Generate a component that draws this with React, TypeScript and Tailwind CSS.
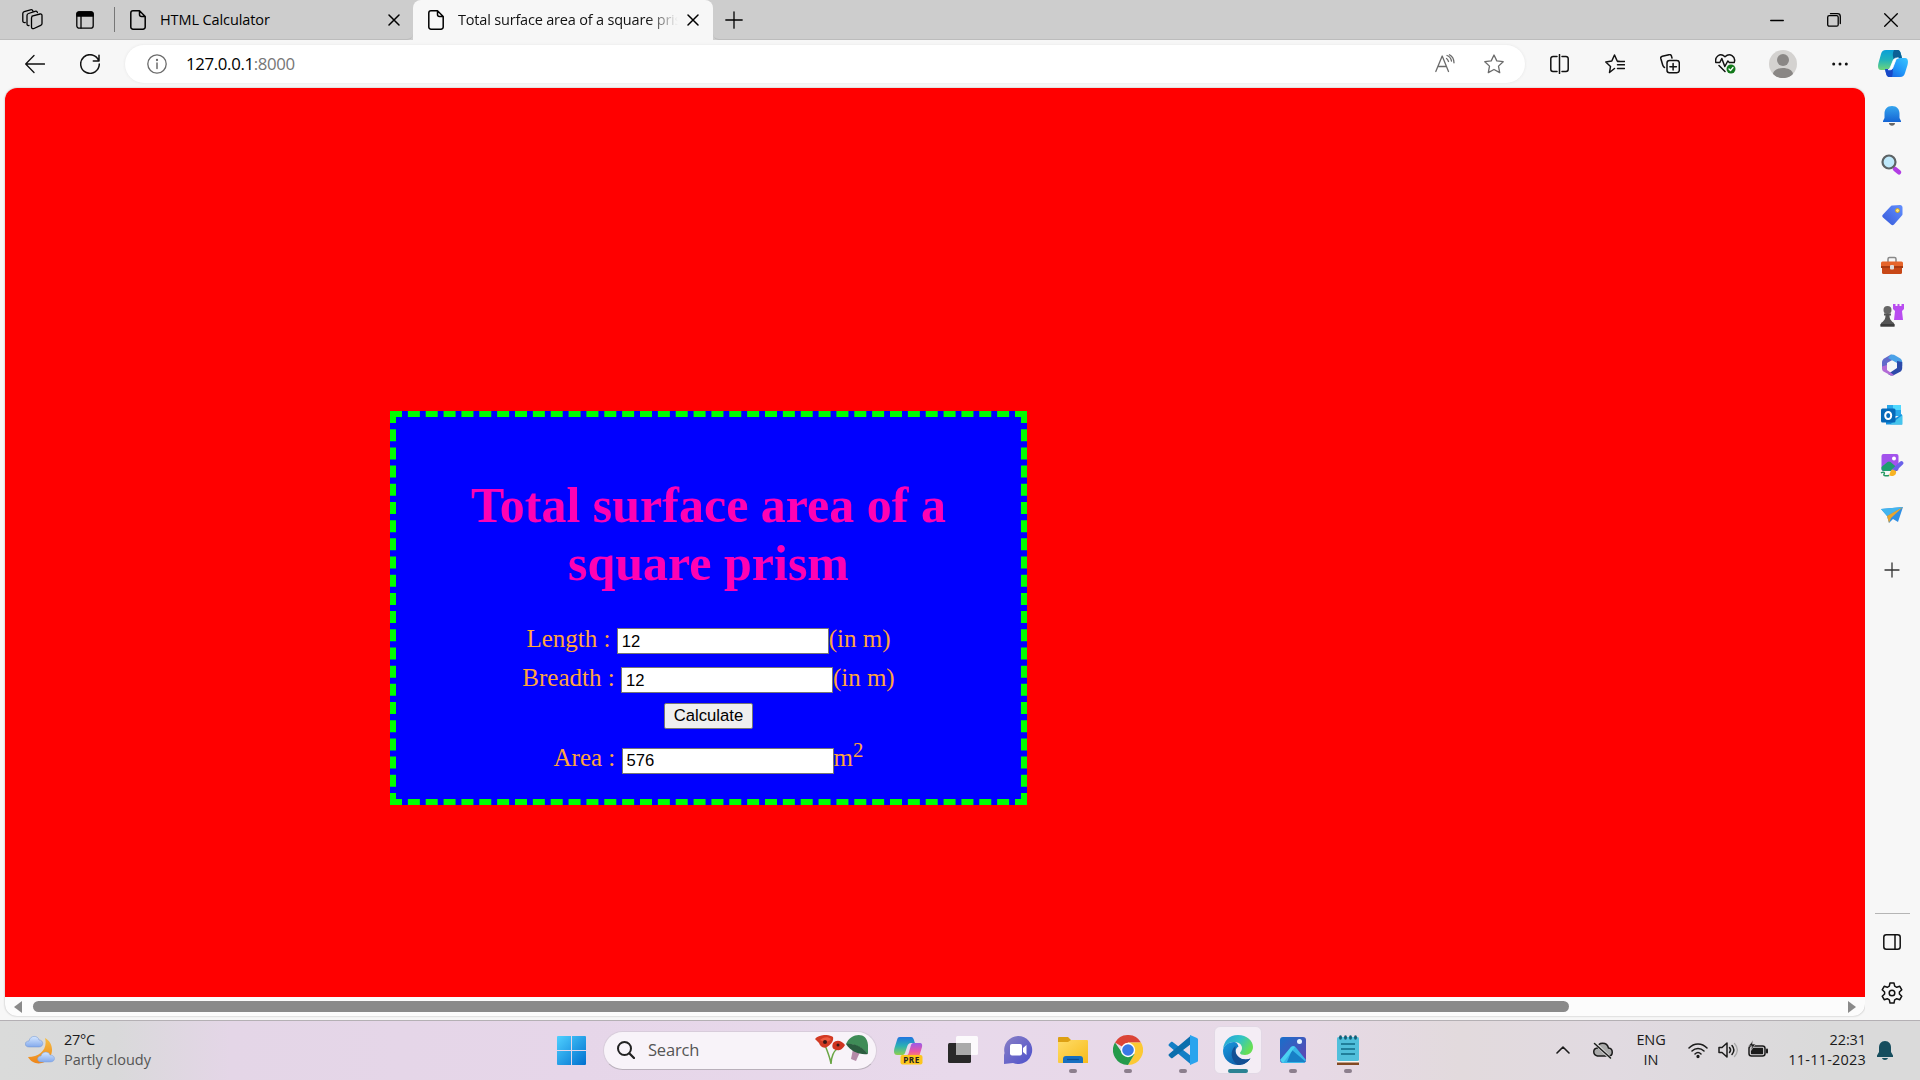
import React, { useState } from "react";

type SvgProps = { className?: string; children: React.ReactNode; box?: string };

function Svg({ className = "", children, box = "0 0 20 20" }: SvgProps) {
  const size = /(^|\s)w-/.test(className) ? "" : "w-5 h-5";
  return (
    <svg viewBox={box} className={`block shrink-0 ${size} ${className}`} fill="none" stroke="currentColor" strokeWidth={1.3} strokeLinecap="round" strokeLinejoin="round">
      {children}
    </svg>
  );
}

const DocIcon = () => (
  <Svg className="w-4 h-5" box="0 0 16 20">
    <path d="M3 .8h6.5L15.200 6.500V17a2.200 2.200 0 0 1-2.200 2.200H3A2.200 2.200 0 0 1 .8 17V3A2.200 2.200 0 0 1 3 .8ZM9.500 .8V4.500a2 2 0 0 0 2 2h3.700" strokeWidth="1.500" />
  </Svg>
);

const CloseIcon = () => (
  <Svg className="w-3 h-3" box="0 0 12 12">
    <path d="M1 1l10 10M11 1L1 11" strokeWidth="1.500" />
  </Svg>
);

function TabStrip() {
  return (
    <div className="flex h-10 items-center bg-[#cdcdcd] text-black">
      <div className="flex w-[413px] h-10 items-center rounded-br-md border-b border-[#bcbcbc]">
        <Svg className="ml-[22px] w-[21px] h-[21px]" box="0 0 21 21">
          <path d="M10 7.200l8-2.200c1.200-.3 2 .3 2 1.400v8c0 .9-.5 1.600-1.300 1.900L12 19.500c-1.400.5-2.500 0-2.500-1.500V9c0-1 .2-1.500 1.200-1.900Z" />
          <path d="M7 16.500c-1.300.3-2-.3-2-1.500V6.500c0-1 .5-1.700 1.500-2L13 2.300c1.300-.4 2.200 0 2.400 1.200M3.200 13.500C1.600 13.800.8 13 .8 12V4.500c0-1 .5-1.600 1.400-1.900L8.500.8c1.200-.3 2 0 2.300 1" />
        </Svg>
        <Svg className="ml-[33px] w-[18px] h-[18px]" box="0 0 18 18">
          <rect x=".8" y=".8" width="16.400" height="16.400" rx="2.500" />
          <path d="M1 5V3a2 2 0 0 1 2-2h12a2 2 0 0 1 2 2v2Z" fill="currentColor" />
          <path d="M5 5v12" />
        </Svg>
        <div className="ml-5 h-[25px] w-px bg-[#777]" />
        <div className="ml-[15px]"><DocIcon /></div>
        <span className="ml-[14px] w-[228px] whitespace-nowrap font-['Open_Sans',sans-serif] text-[14.500px] tracking-[-0.1px]">HTML Calculator</span>
        <CloseIcon />
      </div>
      <div className="flex h-10 w-[300px] items-center rounded-t-lg bg-[#f7f7f7]">
        <div className="ml-[15px]"><DocIcon /></div>
        <span className="ml-[14px] w-[220px] overflow-hidden whitespace-nowrap bg-[linear-gradient(to_right,#111_86%,transparent)] bg-clip-text font-['Open_Sans',sans-serif] text-[14.500px] tracking-[-0.19px] text-transparent">
          Total surface area of a square prism
        </span>
        <div className="ml-[9px]"><CloseIcon /></div>
      </div>
      <div className="flex h-10 grow items-center rounded-bl-md border-b border-[#bcbcbc]">
        <Svg className="ml-3 w-[18px] h-[18px]" box="0 0 18 18"><path d="M9 .8v16.400M.8 9h16.400" /></Svg>
        <div className="grow" />
        <Svg className="w-[14px] h-[14px]" box="0 0 14 14"><path d="M.7 7.500h12.600" /></Svg>
        <Svg className="ml-[43px] w-[14px] h-[14px]" box="0 0 14 14">
          <rect x=".7" y="2.700" width="10.500" height="10.500" rx="1.500" />
          <path d="M3.500 .7h7a2.800 2.800 0 0 1 2.800 2.800v7" />
        </Svg>
        <Svg className="ml-[43px] mr-[22px] w-[14px] h-[14px]" box="0 0 14 14"><path d="M.7.7l12.600 12.600M13.300.7L.7 13.300" /></Svg>
      </div>
    </div>
  );
}

function Toolbar() {
  return (
    <div className="flex h-12 items-center bg-[#f7f7f7] pb-px text-[#111]">
      <Svg className="ml-[25px]"><path d="M19.500 10H.8M9 1.500L.7 10 9 18.500" /></Svg>
      <Svg className="ml-[35px]"><path d="M18.800 7A9.300 9.300 0 1 0 19.300 10M19 1.300V7h-5.700" strokeWidth="1.500" /></Svg>
      <div className="ml-[25px] flex h-[38px] w-[1400px] items-center rounded-full bg-white text-[#6b6b6b] shadow-[0_0_3px_#e4e4e4]">
        <Svg className="ml-[22px]"><circle cx="10" cy="10" r="9.200" /><path d="M10 9v5.500" strokeWidth="1.500" /><circle cx="10" cy="6" r=".5" fill="currentColor" /></Svg>
        <span className="ml-[19px] font-['Open_Sans',sans-serif] text-[16.800px] tracking-[-0.34px] text-black">
          127.0.0.1<span className="text-[#767676]">:8000</span>
        </span>
        <div className="grow" />
        <Svg><path d="M.8 17.500L7.200 2l6.300 15.500M3 12.500h8.500M12 1.500c2.500.8 4 3 4.500 5.500M14.500.8c2.500 1.500 4.500 4.500 4.500 8M11.500 4.500c1 .5 1.500 1.500 2 3" /></Svg>
        <Svg className="ml-[29px] mr-[21px]"><path d="M10 1l2.800 5.900 6.400.8-4.700 4.400 1.200 6.500L10 15.500l-5.700 3.100 1.200-6.500L.8 7.700l6.400-.8Z" /></Svg>
      </div>
      <Svg className="ml-[25px] w-[19px] h-5" box="0 0 19 20"><path d="M7 2.500H3A2.200 2.200 0 0 0 .8 4.700v10.600A2.200 2.200 0 0 0 3 17.500h4M12 2.500h4a2.200 2.200 0 0 1 2.200 2.200v10.600a2.200 2.200 0 0 1-2.200 2.200h-4M9.500 .6v18.800" strokeWidth="1.500" /></Svg>
      <Svg className="ml-9">
        <path d="M9.500 14.500L4.500 18.500l1-6L.8 8l6-1L9.500 1l2.700 6 3 .4M12.500 7.400H19.500M12.500 10.800h7M12.500 14.500h7" strokeWidth="1.500" />
      </Svg>
      <Svg className="ml-[35px]">
        <rect x="7" y="6.500" width="12.300" height="12.300" rx="2.500" strokeWidth="1.500" />
        <path d="M13.100 9.500v6.500M9.900 12.700h6.500M4.500 13.500C3.500 13 3 12 2.700 11L.8 4.500C.5 3.300 1.200 2.500 2.300 2.200L9 .7c1.200-.3 2 .2 2.400 1.200L12 4" strokeWidth="1.500" />
      </Svg>
      <Svg className="ml-[35px] w-[21px] h-[21px]" box="0 0 21 21">
        <path d="M.8 9.300C-.5 4 5 -1 10 3.800 15-1 20.500 4 19.500 8.300M.8 9.500h4l2-4 3 8 3-5.500 1.500 1.500h5M4 12.500l6 6" strokeWidth="1.500" />
        <circle cx="16" cy="16" r="4.500" fill="#13791b" stroke="none" />
        <path d="M14 16l1.500 1.500 2.500-3" stroke="#fff" />
      </Svg>
      <Svg className="ml-[33px] w-7 h-7" box="0 0 28 28">
        <circle cx="14" cy="14" r="14" fill="#d4d2d0" stroke="none" />
        <circle cx="14" cy="10" r="6" fill="#8a8785" stroke="none" />
        <path d="M4 24c1-8 19-8 20 0-5 5.500-15 5.500-20 0Z" fill="#8a8785" stroke="none" />
      </Svg>
      <Svg className="ml-[35px] w-4 h-4" box="0 0 16 16"><g fill="currentColor" stroke="none"><circle cx="1.700" cy="8" r="1.500" /><circle cx="8" cy="8" r="1.500" /><circle cx="14.300" cy="8" r="1.500" /></g></Svg>
      <div className="ml-[30px]"><Copilot /></div>
    </div>
  );
}

function Copilot() {
  return (
    <svg viewBox="0 0 30 27" className="block h-[27px] w-[30px]">
      <defs>
        <linearGradient id="cpa" x1="0" y1="0" x2="0" y2="1"><stop stopColor="#0a9fd8" /><stop offset=".5" stopColor="#22b3bb" /><stop offset="1" stopColor="#70d679" /></linearGradient>
        <linearGradient id="cpb" x1="1" y1="0" x2="0" y2="1"><stop stopColor="#38c6ff" /><stop offset=".5" stopColor="#2196f9" /><stop offset="1" stopColor="#1656d8" /></linearGradient>
      </defs>
      <path d="M8 0h11c3 0 3.500 2 4.200 5l.8 3h-4c-3 0-4 1-5 4l-2 5c-.8 2-2 3-4 3H3c-3 0-3.500-3-2.500-7L3 4C3.800 1.300 5 0 8 0Z" fill="url(#cpa)" />
      <path d="M16 0h3c3 0 3.500 2 4.200 5l.8 3h-4c-2 0-3 .5-4 2-1-3-2-6 0-10Z" fill="#0c6095" />
      <path d="M22 27H12c-3 0-3.600-2-4.300-5L7 19h3c3 0 4-1 5-4l1.500-4c.8-2 2-3 4-3H27c3 0 3.500 3 2.500 7L27 23c-.8 2.700-2 4-5 4Z" fill="url(#cpb)" />
      <path d="M7 19h3c2.500 0 3.500-.8 4.500-3 .5 4 .5 8-.5 11h-2c-3 0-3.600-2-4.300-5Z" fill="#1748c7" />
      <path d="M14.500 18.500l3.300-8.500c.6-1.500 1.300-2 2.700-2h-1c-3 0-4 1-5 4l-2 5c-.7 1.500-1.300 2.300-2.500 2.700 2 .2 3.700.2 4.500-1.200Z" fill="#fff" stroke="#fff" strokeWidth=".8" />
    </svg>
  );
}

function SideIcons() {
  const cls = "block h-[22px] w-[22px] shrink-0";
  return (
    <>
      <svg viewBox="0 0 22 22" className={cls}>
        <defs><linearGradient id="bell" x2="0" y2="1"><stop stopColor="#35a5ee" /><stop offset="1" stopColor="#1464d4" /></linearGradient></defs>
        <path d="M11 1C6 1 3.500 4.500 3.500 8.500V13L2 16v1h18v-1l-1.500-3V8.500C18.500 4.500 16 1 11 1Z" fill="url(#bell)" /><path d="M8 18h6c0 3.500-6 3.500-6 0Z" fill="#666" />
      </svg>
      <svg viewBox="0 0 22 22" className={`${cls} mt-[27px]`}>
        <path d="M14 15l4 3.300" stroke="#b23de4" strokeWidth="4.500" strokeLinecap="round" />
        <circle cx="8" cy="8" r="6.500" fill="#bfe9fb" stroke="#5d6365" strokeWidth="2.200" />
      </svg>
      <svg viewBox="0 0 22 22" className={`${cls} mt-7`}>
        <defs><linearGradient id="tag" x1="1" y1="0" x2="0" y2="1"><stop stopColor="#6390ff" /><stop offset="1" stopColor="#3558d8" /></linearGradient></defs>
        <path d="M11.500 1.500l7.500-.5c1.500 0 2.500 1 2.500 2.500V10c0 1-.5 1.500-1 2l-7.500 8.500c-1 1-2 1-3 0l-8-7c-1-1-1-2 0-3l7.500-8c.5-.5 1-1 2-1Z" fill="url(#tag)" /><circle cx="16.500" cy="6.500" r="2" fill="#ffe57a" stroke="#c9a428" />
      </svg>
      <svg viewBox="0 0 22 22" className={`${cls} mt-[29px]`}>
        <path d="M7 7V4c0-1 .5-1.500 1.500-1.500h5c1 0 1.500.5 1.500 1.500v3" fill="none" stroke="#888" strokeWidth="1.500" />
        <rect x="1" y="10" width="20" height="9" rx="1.500" fill="#c84817" /><rect x="0" y="6.500" width="22" height="6" rx="1.500" fill="#e6652b" /><path d="M0 11h22v2H0Z" fill="#a93b12" /><rect x="9" y="10" width="4" height="4.500" rx="1" fill="#ddd" />
      </svg>
      <svg viewBox="0 0 24 24" className="mt-[26px] block h-6 w-6 shrink-0">
        <path d="M13 1h2.500v2h2V1h2v2h2V1H24v5l-2 2 1 9H14l1-9-2-2Z" fill="#b94cf0" />
        <circle cx="7.500" cy="7" r="4" fill="#666" /><path d="M4 10.500h7v2H9.500c0 3 1 4.500 3 6.500 1.500.5 2 2 2 4.500H.5c0-2.500.5-4 2-4.500 2-2 3-3.500 3-6.500H4Z" fill="#555" /><path d="M.5 21h14v2.500H.5Z" fill="#3c3c3c" />
      </svg>
      <svg viewBox="0 0 22 22" className={`${cls} mt-[27px]`}>
        <path d="M10 .5L4 4C2 5 1 6.500 1 8.500v6l5-2.500V9l8-4.500Z" fill="#6269ca" />
        <path d="M10 .5l3 .3L19 4.300c1.500 1 2.200 2 2.200 4V12L16 9 7 4Z" fill="#4ba2e8" />
        <path d="M21.200 8v6c0 2-.8 3-2 3.800L13 21c-1.500.8-3 .8-4.300 0l-1.700-1 9-6V7Z" fill="#2d4aaa" />
        <path d="M1 12.500v2c0 1.500.8 2.500 2 3.300L9 21c1.500.7 2.700.7 4 0l-7-5v-5Z" fill="#b36bd6" /><path d="M11 7l4 2.300v4L11 15.500l-4-2.200v-4Z" fill="#f7f7f7" />
      </svg>
      <svg viewBox="0 0 22 22" className={`${cls} mt-7`}>
        <path d="M6 1h14v11H6Z" fill="#28a8ea" /><path d="M12 1h8v5h-8Z" fill="#50d9ff" /><path d="M5 10l8 5 8-5v10.500H5Z" fill="#1490df" /><path d="M9 20.500L21.500 11v9.500Z" fill="#45c5ed" />
        <rect x="0" y="4.500" width="14.500" height="14" rx="1.500" fill="#0669b9" /><ellipse cx="7.200" cy="11.500" rx="3" ry="3.500" fill="none" stroke="#fff" strokeWidth="2" />
      </svg>
      <svg viewBox="0 0 24 24" className="mt-[27px] block h-6 w-6 shrink-0">
        <rect x="1.500" y="1" width="17" height="17" rx="2" fill="#a252ec" /><circle cx="14" cy="5.500" r="2" fill="#fff" /><path d="M1.500 14l6-5c1-.8 2-.8 3 0l7 6v1c0 1-1 2-2 2h-12c-1 0-2-1-2-2Z" fill="#1e9f6d" />
        <path d="M13 18L21.500 10" stroke="#6a61ea" strokeWidth="3.800" strokeLinecap="round" /><path d="M16 18c1 4-3 6-7 4.500 1-1 1-6 4-6Z" fill="#f7b323" /><path d="M1 20c3-2 4 0 3 1.500s3 1.500 5 1" fill="none" stroke="#259862" strokeWidth="1.500" />
      </svg>
      <svg viewBox="0 0 22 22" className={`${cls} mt-[27px]`}>
        <path d="M0 5L22 3l-5 15-5-3-4 4-2-7Z" fill="#2f8fe4" /><path d="M0 5L22 3 6 12Z" fill="#43b5ee" /><path d="M22 3L6 12l2 7 2-5Z" fill="#e7a52f" />
      </svg>
      <Svg className="mt-[36px] w-4 h-4 text-[#333]" box="0 0 16 16"><path d="M8 1v14M1 8h14" /></Svg>
    </>
  );
}

function Sidebar() {
  return (
    <aside className="flex w-[55px] flex-col items-center bg-[#f7f7f7] pt-[17px] pr-px text-[#111]">
      <SideIcons />
      <div className="grow" />
      <div className="h-px w-[35px] bg-[#b5b5b5]" />
      <Svg className="mt-5 w-[18px] h-4" box="0 0 18 16"><rect x=".8" y=".8" width="16.400" height="14.400" rx="2.500" strokeWidth="1.500" /><path d="M12 1v14" strokeWidth="1.500" /></Svg>
      <Svg className="mt-8 mb-4 w-[22px] h-[22px]" box="1 1 22 22">
        <path d="M10 2h4l.7 3.200 2 1.100 3.100-1 2 3.500-2.400 2.200v2l2.400 2.200-2 3.500-3.100-1-2 1.100L14 22h-4l-.7-3.200-2-1.100-3.100 1-2-3.500L4.600 13v-2L2.200 8.800l2-3.500 3.100 1 2-1.100Z" strokeWidth="1.500" />
        <circle cx="12" cy="12" r="2.800" strokeWidth="1.500" />
      </Svg>
    </aside>
  );
}

const inputCls = "h-[26px] w-[212px] border border-[#767676] bg-white pl-1 font-['Liberation_Sans',sans-serif] text-[16.670px] text-black outline-none";

function PrismForm() {
  const [length, setLength] = useState("12");
  const [breadth, setBreadth] = useState("12");
  const [area, setArea] = useState("576");
  return (
    <div className="mt-[323px] ml-[385px] flex h-[394px] w-[637px] flex-col items-center border-6 border-dashed border-[#00ff00] bg-[#0000ff] pt-[59px] font-['Liberation_Serif',serif] text-[25px] text-[#ffa53c]">
      <h1 className="w-[540px] text-center text-[50px] leading-[58px] font-bold text-[#ff00b4]">Total surface area of a square prism</h1>
      <div className="mt-[36px] flex h-[26px] items-center whitespace-pre">
        <span className="relative -top-0.5">Length : </span>
        <input className={`${inputCls} pt-px`} value={length} onChange={(e) => setLength(e.target.value)} />
        <span className="relative -top-0.5">(in m)</span>
      </div>
      <div className="mt-[13px] flex h-[26px] items-center whitespace-pre">
        <span className="relative -top-0.5">Breadth : </span>
        <input className={`${inputCls} pt-px`} value={breadth} onChange={(e) => setBreadth(e.target.value)} />
        <span className="relative -top-0.5">(in m)</span>
      </div>
      <button
        className="mt-[10px] h-[26px] w-[89px] rounded-xs border border-[#767676] bg-[#efefef] font-['Liberation_Sans',sans-serif] text-[16.670px] leading-none text-black"
        onClick={() => setArea(String(2 * Number(length) ** 2 + 2 * Number(length) * Number(breadth)))}
      >
        Calculate
      </button>
      <div className="mt-[19px] flex h-[26px] items-center whitespace-pre">
        <span className="relative -top-[3px]">Area : </span>
        <input className={inputCls} value={area} readOnly />
        <span className="relative -top-[3px]">m<sup className="-top-[0.43em] text-[20.800px]">2</sup></span>
      </div>
    </div>
  );
}

function TaskItem({ children, mark }: { children: React.ReactNode; mark?: boolean }) {
  return (
    <div className="flex h-12 w-[55px] flex-col items-center pt-[9px]">
      {children}
      {mark && <div className="mt-1 h-1 w-2 rounded-full bg-[#8c7f8d]" />}
    </div>
  );
}

function Taskbar() {
  const ic = "block h-[30px] w-[30px] shrink-0";
  return (
    <footer className="flex h-[60px] items-center border-t border-[#b4b0b4] bg-[linear-gradient(to_right,#dadbda_0%,#d9d9da_6%,#e4d6e7_12%,#e6d6e9_30%,#e8d9eb_50%,#e7d9e6_68%,#e2dadd_76%,#e1dae1_84%,#dadada_95%)] pb-px font-['Open_Sans',sans-serif] text-[14.500px] text-[#1b1b1b]">
      <svg viewBox="0 0 30 30" className="ml-[25px] block h-[30px] w-[30px] shrink-0">
        <defs><linearGradient id="moon" x2="0" y2="1"><stop stopColor="#f5bd43" /><stop offset="1" stopColor="#ee8519" /></linearGradient><linearGradient id="cl" x2="0" y2="1"><stop stopColor="#d5e7ff" /><stop offset="1" stopColor="#83a9ec" /></linearGradient></defs>
        <path d="M20 3c7 4 9 12 5 19-5 8-17 9-22 0 12 0 20-8 17-19Z" fill="url(#moon)" />
        <path d="M4 12c-5 0-5-6 0-6 1-6 9-6 10-1 5 0 5 7 0 7Z" fill="url(#cl)" stroke="#6e93cf" strokeWidth=".5" />
        <path d="M16 27c-4.500 0-4.500-6 0-6 1-5 8-5 9-1 6 0 6 7 0 7Z" fill="url(#cl)" stroke="#7da0dd" strokeWidth=".5" />
      </svg>
      <div className="ml-[9px] w-[486px] shrink-0 leading-5">
        <div className="tracking-[-0.3px]">27°C</div>
        <div className="text-[#555]">Partly cloudy</div>
      </div>
      <svg viewBox="0 0 29 29" className="ml-[7px] block h-[29px] w-[29px] shrink-0">
        <defs><linearGradient id="win" x2="1" y2="1"><stop stopColor="#4fd0ff" /><stop offset="1" stopColor="#0070cf" /></linearGradient></defs>
        <path d="M1 0h13v14H0V1a1 1 0 0 1 1-1ZM15 0h13a1 1 0 0 1 1 1v13H15ZM0 15h14v14H1a1 1 0 0 1-1-1ZM15 15h14v13a1 1 0 0 1-1 1H15Z" fill="url(#win)" />
      </svg>
      <div className="ml-[17px] flex h-[39px] w-[274px] shrink-0 items-center rounded-full border border-[#d8ccdb] border-b-[#b9b0bb] bg-[#f8f3f9]">
        <Svg className="ml-[13px] w-[18px] h-[18px] text-[#222]" box="0 0 18 18"><circle cx="7.500" cy="7.500" r="6.500" strokeWidth="2" /><path d="M12.500 12.500l4.500 4.500" strokeWidth="2.300" /></Svg>
        <span className="ml-[13px] text-[16.500px] tracking-[-0.2px] text-[#555]">Search</span>
        <div className="grow" />
        <svg viewBox="0 0 54 30" className="mr-[7px] block h-[30px] w-[54px]">
          <path d="M10 10c2 6 5 12 6 19M22 14c-3 2-6 8-6 15" stroke="#6aa545" strokeWidth="1.500" fill="none" />
          <path d="M0 4C4-1 14-1 18 2c1 5-3 8-6 10-4 2-7-1-8-4Z" fill="#d23a24" /><path d="M18 8c4-4 9-2 12 2-2 3-4 6-8 5-3 0-6-2-4-7Z" fill="#cf3420" /><path d="M5 5c3-3 8-4 11-1-2 3-6 4-11 1Z" fill="#ee5b40" /><circle cx="10" cy="7" r="2" fill="#3c1717" /><circle cx="23" cy="10" r="1.500" fill="#3c1717" />
          <path d="M38 14l7 3-4 9-5-2Z" fill="#b58aa8" /><path d="M31 9C36-2 52-4 53 10v9C47 12 40 9 31 9Z" fill="#3f8c57" /><path d="M31 9c8-1 17 3 22 10-8 1-17-2-22-10Z" fill="#2b5d3f" />
        </svg>
      </div>
      <div className="ml-[3px] flex">
        <TaskItem>
          <svg viewBox="0 0 30 30" className={ic}>
            <defs><linearGradient id="pa" x2="0" y2="1"><stop stopColor="#1f74e0" /><stop offset=".5" stopColor="#2bb0b4" /><stop offset="1" stopColor="#8fd04d" /></linearGradient><linearGradient id="pb" x2="0" y2="1"><stop stopColor="#9a5be8" /><stop offset=".6" stopColor="#ea57a5" /><stop offset="1" stopColor="#ff8a5c" /></linearGradient></defs>
            <path d="M7 2h11c2 0 3 2 3.500 5l.5 1h-4c-2 0-3 1-4 4l-2 6c-.6 1.500-1.500 2-3 2H4c-3 0-3.500-3-2.500-7L4 5c.6-2 1-3 3-3Z" fill="url(#pa)" /><path d="M14 20c1 0 1.500-1 2-3l2-7c.5-1.500 1.500-2 3-2h6c2 0 2.500 2 2 4l-3 10H12Z" fill="url(#pb)" />
            <rect x="7.500" y="20" width="22" height="9.500" rx="2" fill="#fcc61d" /><text x="18.500" y="27.700" textAnchor="middle" fontSize="8.200" fontWeight="700" fill="#222" fontFamily="Open Sans" letterSpacing=".4">PRE</text>
          </svg>
        </TaskItem>
        <TaskItem>
          <svg viewBox="0 0 30 30" className={ic}><rect x="0" y="8" width="23" height="20" rx="1.500" fill="#292929" /><rect x="8" y="1" width="22" height="19" rx="1.500" fill="#fff" fillOpacity=".85" /><path d="M8 8h15v12H8Z" fill="#aaa" /></svg>
        </TaskItem>
        <TaskItem>
          <svg viewBox="0 0 30 30" className={ic}>
            <defs><linearGradient id="chat" x2="1" y2="1"><stop stopColor="#8a80c5" /><stop offset="1" stopColor="#4c50cc" /></linearGradient></defs>
            <path d="M15 1a14 14 0 1 1-5 27L1 29V20l.5-2A14 14 0 0 1 15 1Z" fill="url(#chat)" /><rect x="7" y="9" width="12" height="11.500" rx="2" fill="#fff" /><path d="M20 13l3.500-3v10L20 17Z" fill="#fff" />
          </svg>
        </TaskItem>
        <TaskItem mark>
          <svg viewBox="0 0 30 30" className={ic}>
            <defs><linearGradient id="fld" x2="1" y2="1"><stop stopColor="#ffdc68" /><stop offset="1" stopColor="#f7bb1b" /></linearGradient></defs>
            <path d="M1 2h9l3 3h15v10H0V3a1 1 0 0 1 1-1Z" fill="#dda013" /><path d="M0 7h10l3-2h16a1 1 0 0 1 1 1v22H1a1 1 0 0 1-1-1Z" fill="url(#fld)" /><path d="M5 28v-4c0-2 1-3 3-3h14c2 0 3 1 3 3v4Z" fill="#176fc0" /><path d="M9 24.500h12" stroke="#0d4d91" strokeWidth="1.200" />
          </svg>
        </TaskItem>
        <TaskItem mark>
          <svg viewBox="0 0 30 30" className={ic}>
            <path d="M15 15L2 7.500A15 15 0 0 1 28 7.500H15Z" fill="#db4437" /><path d="M15 7.500h13A15 15 0 0 1 15 30l6.500-11Z" fill="#fcc934" /><path d="M2 7.500A15 15 0 0 0 15 30l6.500-11H10Z" fill="#249a4b" /><circle cx="15" cy="15" r="7.200" fill="#fff" /><circle cx="15" cy="15" r="5.800" fill="#3879e6" />
          </svg>
        </TaskItem>
        <TaskItem mark>
          <svg viewBox="0 0 30 30" className={ic}>
            <path d="M1 9l2-2c.6-.4 1.100-.3 1.600 0L23 21v8.500L1 11c-.6-.6-.6-1.400 0-2Z" fill="#137fc6" /><path d="M1 21l2 2c.6.400 1.100.3 1.600 0L23 9V.5L1 19c-.6.600-.6 1.400 0 2Z" fill="#0b6ead" /><path d="M22 0l7 3c.7.400 1 .8 1 1.500v21c0 .8-.3 1.200-1 1.500l-7 3Z" fill="#2aa4ee" />
          </svg>
        </TaskItem>
        <div className="flex w-[55px] justify-center">
          <div className="flex h-12 w-12 flex-col items-center rounded-md border border-[#e2d8e5] bg-[#f4edf5] pt-2">
            <svg viewBox="0 0 30 30" className={ic}>
              <defs><linearGradient id="ea" x1="0" y1="0" x2="1" y2=".5"><stop stopColor="#269ddd" /><stop offset=".55" stopColor="#31c4c5" /><stop offset="1" stopColor="#67df55" /></linearGradient><linearGradient id="eb" x2="1" y2="1"><stop stopColor="#179be0" /><stop offset="1" stopColor="#0f4b98" /></linearGradient></defs>
              <path d="M15 0c9 0 15 6 15 12 0 5-4 8-8 8-3 0-5-1-5-2s2-2 2-5c0-4-4-6-8-6-5 0-9 3-11 7C1 6 6 0 15 0Z" fill="url(#ea)" />
              <path d="M11 7C5 7 0 11 0 16c0 8 7 14 15 14 5 0 9-2 12.500-6.500-7 3-15-1-15-7 0-2 1-4 3-5C15 9 13 7 11 7Z" fill="url(#eb)" />
              <path d="M12.500 11C7 15 7 25 15 30c5 0 9-2 12.500-6.500-7 3-17-1-15-12.500Z" fill="#134f94" />
            </svg>
            <div className="mt-1 h-1 w-5 rounded-full bg-[#2b8293]" />
          </div>
        </div>
        <TaskItem mark>
          <svg viewBox="0 0 30 30" className={ic}>
            <defs><linearGradient id="ph" x2="1" y2="1"><stop stopColor="#176fca" /><stop offset="1" stopColor="#6644b0" /></linearGradient></defs>
            <rect x="2" y="2" width="26" height="26" rx="3" fill="url(#ph)" /><path d="M3 27L13 12c1.500-1.500 3-1.500 4.500 0L28 25c-.5 2-1.500 3-3 3H5Z" fill="#37b6e8" /><path d="M14 15L28 27H9Z" fill="#187fc6" /><path d="M2 25l11-13c1.500-1 3-1 4 0L5 28Z" fill="#4ad1f2" /><circle cx="21.500" cy="6.500" r="2.500" fill="#e7f5ff" />
          </svg>
        </TaskItem>
        <TaskItem mark>
          <svg viewBox="0 0 30 30" className={ic}>
            <path d="M4 25h22v5H4Z" fill="#824922" /><path d="M4 24h22v3.500H4Z" fill="#faf4ef" /><rect x="4" y="2" width="22" height="24" rx="1.500" fill="#51bfdb" /><path d="M8 9h14M8 14h14M8 19h14" stroke="#126b87" strokeWidth="1.700" />
            <g fill="#155f76"><ellipse cx="7.500" cy="2.500" rx="1.500" ry="2.300" /><ellipse cx="12.500" cy="2.500" rx="1.500" ry="2.300" /><ellipse cx="17.500" cy="2.500" rx="1.500" ry="2.300" /><ellipse cx="22.500" cy="2.500" rx="1.500" ry="2.300" /></g>
          </svg>
        </TaskItem>
      </div>
      <div className="grow" />
      <Svg className="w-[14px] h-2" box="0 0 14 8"><path d="M1 7l6-6 6 6" strokeWidth="1.600" /></Svg>
      <Svg className="ml-[23px]">
        <path d="M4.500 16C-.5 15-.5 8.500 4.500 8 5 1.500 14 1.500 15.500 8c5 .5 5 8 0 8Z" fill="#aaa" strokeWidth="1.500" /><path d="M2 3l16 16" stroke="#ddd" strokeWidth="3" /><path d="M1.500 3.500L17.500 18" strokeWidth="1.500" />
      </Svg>
      <div className="ml-[23px] w-[30px] text-center leading-5 tracking-[-0.1px]"><div>ENG</div><div>IN</div></div>
      <Svg className="ml-[22px]">
        <path d="M1 8c5-5.500 13-5.500 18 0M4 11c3.500-3.500 8.500-3.500 12 0M7 14c2-2 4-2 6 0" strokeWidth="1.500" /><circle cx="10" cy="16.500" r="1" fill="currentColor" />
      </Svg>
      <Svg className="ml-[10px]">
        <path d="M1 7.500h3L9 3v14l-5-4.500H1ZM11.500 7.500c1.300 1.500 1.300 3.500 0 5M14 5.500c2.500 3 2.500 6 0 9" strokeWidth="1.500" /><path d="M16.500 3.500c3.500 4 3.500 9 0 13" stroke="#aaa" />
      </Svg>
      <Svg className="ml-[10px]">
        <rect x="1" y="6" width="16" height="10" rx="2.500" strokeWidth="1.500" /><rect x="3.500" y="8.500" width="11" height="5" fill="currentColor" /><path d="M19 9.500v3" strokeWidth="2" /><path d="M5 .5L.5 6H4l-1 4.500L7.500 4H4.500Z" fill="currentColor" stroke="#dcd9dc" strokeWidth=".6" />
      </Svg>
      <div className="ml-3 w-[86px] text-right leading-5 whitespace-nowrap"><div className="tracking-[-0.1px]">22:31</div><div className="tracking-[0.2px]">11-11-2023</div></div>
      <svg viewBox="0 0 20 19" className="mr-[25px] ml-[9px] block h-[19px] w-5 shrink-0"><path d="M10 0C6 0 4 3 4 6.500V11L2 14.500V16h16v-1.500L16 11V6.500C16 3 14 0 10 0ZM7 17h6c-.5 2.500-5.500 2.500-6 0Z" fill="#174e5e" /></svg>
    </footer>
  );
}

export default function App() {
  return (
    <div className="flex h-[1080px] w-[1920px] flex-col overflow-hidden bg-[#f7f7f7]">
      <TabStrip />
      <Toolbar />
      <div className="flex h-[932px]">
        <main className="ml-[5px] mb-1 flex w-[1860px] flex-col overflow-hidden rounded-xl bg-[#fcfcfc] shadow-[0_0_2px_#aaa]">
          <div className="h-[909px] bg-[#ff0000] flow-root"><PrismForm /></div>
          <div className="flex h-[19px] items-center text-[#8a8a8a]">
            <svg viewBox="0 0 9 12" className="ml-[9px] h-3 w-[9px]"><path d="M8 0v12L0 6Z" fill="currentColor" /></svg>
            <div className="ml-[10px] h-[11px] w-[1536px] rounded-full bg-[#8a8a8a]" />
            <div className="grow" />
            <svg viewBox="0 0 9 12" className="mr-[9px] h-3 w-[9px]"><path d="M1 0v12l8-6Z" fill="currentColor" /></svg>
          </div>
        </main>
        <Sidebar />
      </div>
      <Taskbar />
    </div>
  );
}
